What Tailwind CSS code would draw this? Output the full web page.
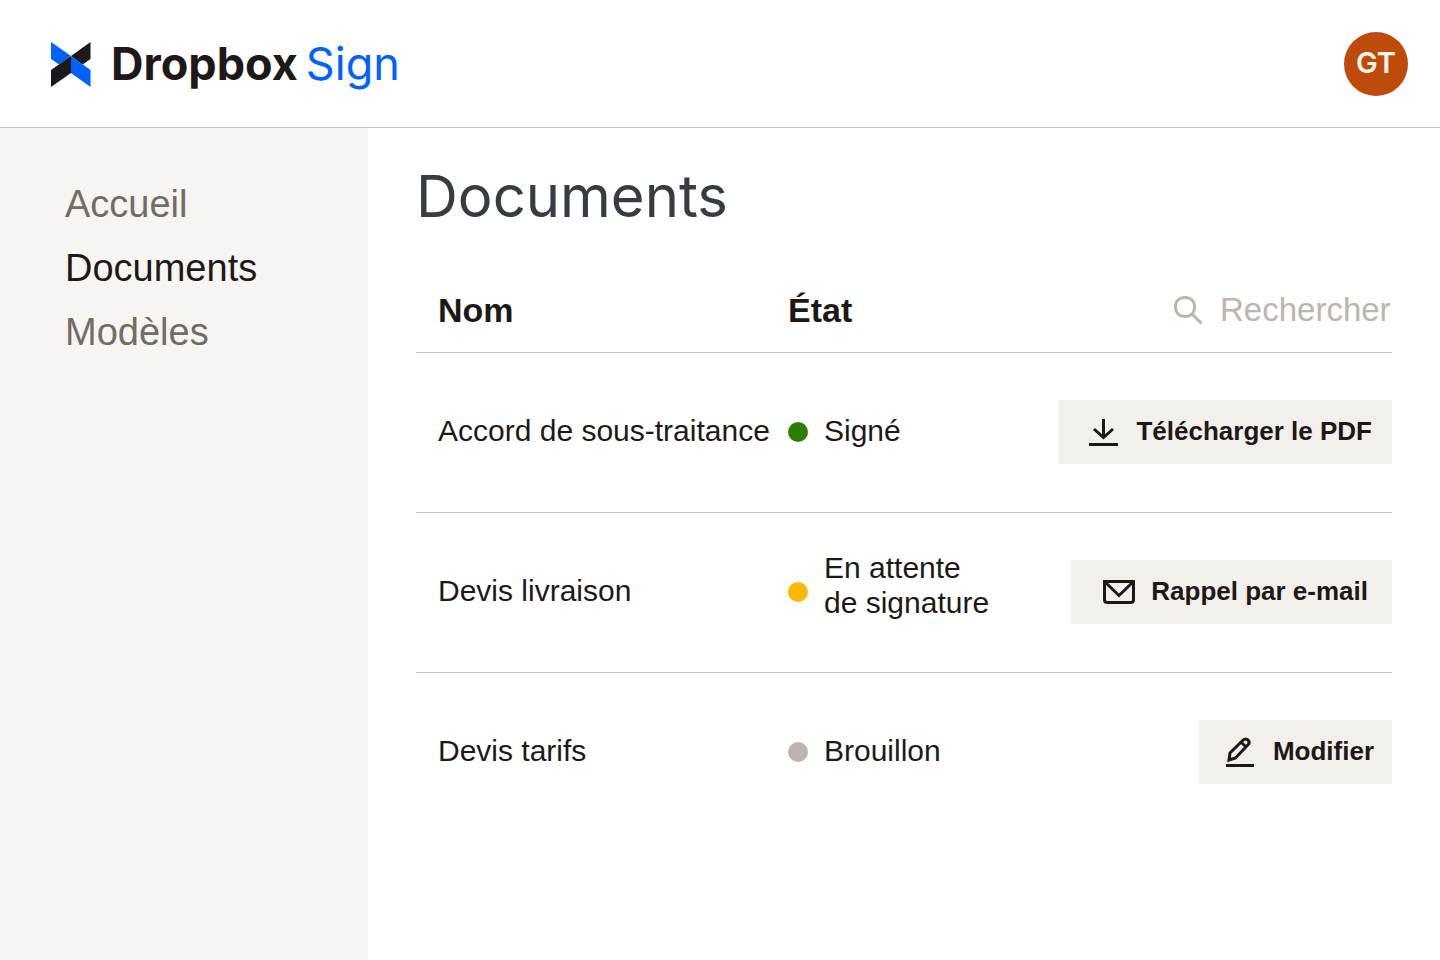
<!DOCTYPE html>
<html lang="fr">
<head>
<meta charset="utf-8">
<meta name="viewport" content="width=device-width, initial-scale=1">
<title>Dropbox Sign – Documents</title>
<script src="https://cdn.jsdelivr.net/npm/@tailwindcss/browser@4"></script>
</head>
<body class="flex min-h-screen flex-col bg-white font-['Liberation_Sans',Arial,sans-serif] text-[#1e1919]">
<header class="flex h-32 items-center justify-between border-b border-[#c8c5be] pr-8 pl-[51px]">
  <a href="#" class="flex items-end gap-5 font-[Inter,sans-serif] text-[45px] leading-[46px]">
    <svg class="h-[45px] w-10" viewBox="0 0 40 45" aria-hidden="true">
      <path fill="#1e1919" d="M39.500 0v17l-8 5.500L20 14z"/>
      <path fill="#0061ff" d="M0 0l20 14-12 8.500L0 17z"/>
      <path fill="#1e1919" d="M20 14v17L0 45V28z"/>
      <path fill="#0061ff" d="M20 14l19.500 14v17L20 31z"/>
    </svg>
    <span class="flex gap-2"><span class="font-bold">Dropbox</span><span class="text-[#0061ff]">Sign</span></span>
  </a>
  <button type="button" class="size-16 rounded-full bg-[#be4b0a] pb-0.5 font-[Inter,sans-serif] text-[29px] font-semibold text-[#f7f5f2]">GT</button>
</header>
<div class="flex flex-1">
  <nav class="w-[368px] shrink-0 bg-[#f7f5f2] pt-11 pr-8 pl-[65px] text-[38px] leading-[64px] text-[#736c64]">
    <ul>
      <li><a href="#">Accueil</a></li>
      <li><a href="#" aria-current="page" class="text-[#1e1919]">Documents</a></li>
      <li><a href="#">Modèles</a></li>
    </ul>
  </nav>
  <main class="flex-1 px-12 pt-9">
    <h1 class="font-[Inter,sans-serif] text-[58px] leading-[64px] text-[#363c42]">Documents</h1>
    <table class="mt-10 w-full table-fixed border-collapse text-left text-[30px] leading-9">
      <colgroup><col class="w-[372px]"><col class="w-[240px]"><col></colgroup>
      <thead>
        <tr class="h-[84px] border-b border-[#c8c5be] text-[34px]">
          <th scope="col" class="pl-[22px] font-bold">Nom</th>
          <th scope="col" class="font-bold">État</th>
          <th scope="col" class="font-normal">
            <div class="flex items-center justify-end gap-4 text-[#bbb5ae]">
              <label for="search" aria-label="Rechercher">
                <svg class="size-8" viewBox="0 0 32 32" fill="none" stroke="currentColor" stroke-width="3" aria-hidden="true">
                  <path d="M13 3.500c5.800 0 9.500 3.700 9.500 9.500s-3.700 9.500-9.500 9.500S3.500 18.800 3.500 13 7.200 3.500 13 3.500zM20 20l9.500 9.500"/>
                </svg>
              </label>
              <input id="search" type="text" aria-label="Rechercher" placeholder="Rechercher" class="w-[172px] bg-transparent text-[33px] outline-none placeholder:text-[#bbb5ae]">
            </div>
          </th>
        </tr>
      </thead>
      <tbody>
        <tr class="h-40 border-b border-[#c8c5be]">
          <td class="pb-0.5 pl-[22px] whitespace-nowrap">Accord de sous-traitance</td>
          <td><div class="flex items-center gap-4"><span class="size-5 shrink-0 rounded-full bg-[#2d7d00]"></span><span class="pb-0.5">Signé</span></div></td>
          <td class="text-right">
            <button type="button" class="inline-flex h-16 items-center gap-4 bg-[#f3efeb] pr-5 pl-[30px] align-middle text-[26px] font-bold whitespace-nowrap">
              <svg class="size-8" viewBox="0 0 32 32" fill="none" stroke="currentColor" stroke-width="3" aria-hidden="true">
                <path d="M15.500 3v18M6 13l9.500 8.500L25 13M1 28.500h29"/>
              </svg>
              <span class="pb-0.5">Télécharger le PDF</span>
            </button>
          </td>
        </tr>
        <tr class="h-40 border-b border-[#c8c5be]">
          <td class="pb-0.5 pl-[22px]">Devis livraison</td>
          <td><div class="flex items-center gap-4"><span class="size-5 shrink-0 rounded-full bg-[#fab900]"></span><span class="pb-3.5 leading-[35px] whitespace-nowrap">En attente<br>de signature</span></div></td>
          <td class="text-right">
            <button type="button" class="inline-flex h-16 items-center gap-4 bg-[#f3efeb] pr-6 pl-8 align-middle text-[26px] font-bold whitespace-nowrap">
              <svg class="size-8" viewBox="0 0 32 32" fill="none" stroke="currentColor" stroke-width="3" aria-hidden="true">
                <path d="M1.500 5.500h29V24c0 2-1 2.500-3 2.500h-23c-2 0-3-.5-3-2.500zM2.500 6.500L16 19.500l13.500-13"/>
              </svg>
              <span class="pb-0.5">Rappel par e-mail</span>
            </button>
          </td>
        </tr>
        <tr class="h-40">
          <td class="pb-0.5 pl-[22px]">Devis tarifs</td>
          <td><div class="flex items-center gap-4"><span class="size-5 shrink-0 rounded-full bg-[#bbb5ae]"></span><span class="pb-0.5">Brouillon</span></div></td>
          <td class="text-right">
            <button type="button" class="inline-flex h-16 items-center gap-[18px] bg-[#f3efeb] pr-[18px] pl-6 align-middle text-[26px] font-bold whitespace-nowrap">
              <svg class="size-8" viewBox="0 0 32 32" fill="none" stroke="currentColor" aria-hidden="true">
                <path stroke-width="3" d="M6 24l1-7L20.200 4c1.500-1.500 3.400-1.500 4.800 0s1.500 3.300 0 4.800L12.500 22zM18 6l5 5"/>
                <path stroke-width="3" d="M3 29.500h28"/>
              </svg>
              <span class="pb-0.5">Modifier</span>
            </button>
          </td>
        </tr>
      </tbody>
    </table>
  </main>
</div>
</body>
</html>
